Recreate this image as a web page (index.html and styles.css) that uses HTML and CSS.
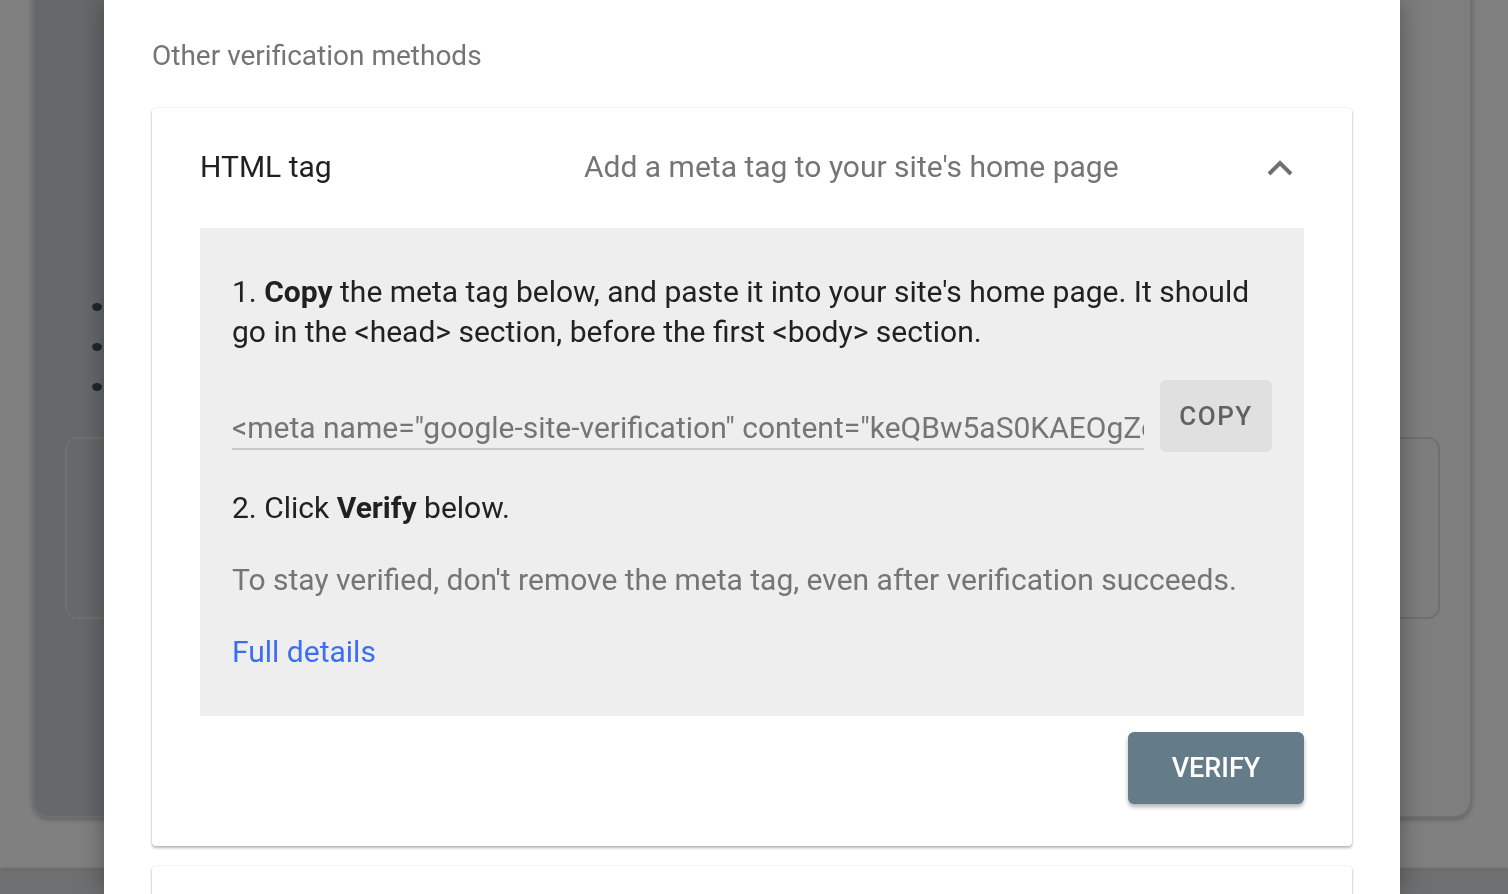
FILE: index.html
```html
<!DOCTYPE html>
<html>
<head>
<meta charset="utf-8">
<link rel="stylesheet" href="styles.css">
</head>
<body>
<div class="page">
  <div class="bg-card">
    <ul class="bg-list"><li></li><li></li><li></li></ul>
    <div class="bg-box"></div>
  </div>
  <div class="bg-footer"></div>
</div>

<div class="dialog">
  <div class="dialog-title">Other verification methods</div>
  <div class="method-card">
    <div class="method-head">
      <div class="method-name">HTML tag</div>
      <div class="method-desc">Add a meta tag to your site's home page</div>
      <svg class="chevron" width="28" height="18" viewBox="0 0 28 18"><path d="M3 15 L14 4 L25 15" fill="none" stroke="#6f6f6f" stroke-width="4"/></svg>
    </div>
    <div class="method-body">
      <div class="panel">
        <p class="step">1. <b>Copy</b> the meta tag below, and paste it into your site's home page. It should go in the &lt;head&gt; section, before the first &lt;body&gt; section.</p>
        <div class="copy-row">
          <div class="tag-field"><span class="tag-text">&lt;meta name="google-site-verification" content="keQBw5aS0KAEOgZqLr1x7vYpT3dWmN8cHs2uJfBiE4o" /&gt;</span></div>
          <button class="copy-btn">COPY</button>
        </div>
        <p class="step">2. Click <b>Verify</b> below.</p>
        <p class="note">To stay verified, don't remove the meta tag, even after verification succeeds.</p>
        <a class="details" href="#">Full details</a>
      </div>
      <div class="actions">
        <button class="verify-btn">VERIFY</button>
      </div>
    </div>
  </div>
  <div class="method-card next"></div>
</div>
</body>
</html>
```

FILE: styles.css
```css
html, body {
  margin: 0;
  padding: 0;
  height: 100%;
  overflow: hidden;
}
body {
  background: #808080;
  font-family: Roboto, "Liberation Sans", sans-serif;
}
.page {
  height: 894px;
  display: flex;
  flex-direction: column;
}
.bg-card {
  margin: -20px 36px 0 32px;
  height: 838px;
  box-sizing: border-box;
  border-radius: 0 0 18px 18px;
  background: linear-gradient(to right, #65696b 0, #65696b 72px, #7e7e7e 1368px, #7e7e7e 100%);
  border: 2px solid #707070;
  border-top: none;
  box-shadow: 0 2px 4px rgba(0,0,0,0.25);
  padding-top: 323px;
}
.bg-list {
  margin: 0;
  padding: 0 0 0 58px;
  list-style: none;
}
.bg-list li {
  width: 10px;
  height: 8px;
  border-radius: 50%;
  background: #23282b;
  margin-bottom: 32px;
}
.bg-box {
  margin: 46px 30px 0 31px;
  height: 182px;
  box-sizing: border-box;
  border: 2px solid #6e7072;
  border-radius: 12px;
}
.bg-footer {
  margin-top: 52px;
  flex: 1;
  background: #6e6f70;
  box-shadow: 0 -1px 3px rgba(0,0,0,0.3);
}

.dialog {
  position: fixed;
  top: 0;
  left: 104px;
  width: 1296px;
  height: 894px;
  background: #fff;
  box-shadow: 0 0 24px rgba(0,0,0,0.35);
  padding: 37px 48px 0;
  box-sizing: border-box;
  overflow: hidden;
}
.dialog-title {
  font-size: 28px;
  line-height: 38px;
  color: #757575;
  margin-bottom: 33px;
}
.method-card {
  background: #fff;
  border-radius: 4px;
  box-shadow: 0 2px 3px rgba(0,0,0,0.28), 0 0 2px rgba(0,0,0,0.12);
  width: 1200px;
}
.method-card.next {
  margin-top: 20px;
  height: 60px;
}
.method-head {
  display: flex;
  align-items: center;
  height: 120px;
  padding: 0 58px 0 48px;
}
.method-name {
  width: 384px;
  font-size: 30px;
  line-height: 38px;
  padding-bottom: 2px;
  color: #212121;
}
.method-desc {
  flex: 1;
  font-size: 30px;
  line-height: 38px;
  padding-bottom: 2px;
  color: #757575;
}
.chevron {
  display: block;
}
.method-body {
  padding: 0 48px 42px;
}
.panel {
  background: #eeeeee;
  padding: 44px 32px 44px;
}
.step {
  margin: 0;
  font-size: 30px;
  line-height: 40px;
  color: #212121;
}
.step b {
  font-weight: 700;
}
.copy-row {
  display: flex;
  align-items: flex-start;
  gap: 16px;
  margin: 28px 0 36px;
}
.tag-field {
  flex: 1;
  min-width: 0;
  overflow: hidden;
  white-space: nowrap;
  border-bottom: 2px solid #c8c8c8;
  padding-top: 28px;
  height: 40px;
}
.tag-text {
  font-size: 30px;
  line-height: 40px;
  color: #757575;
}
.copy-btn {
  width: 112px;
  height: 72px;
  border: none;
  border-radius: 6px;
  background: #e0e0e0;
  color: #616161;
  font-family: Roboto, "Liberation Sans", sans-serif;
  font-size: 26px;
  font-weight: 500;
  letter-spacing: 1.5px;
  padding: 0;
}
.note {
  margin: 32px 0 0;
  font-size: 30px;
  line-height: 40px;
  color: #757575;
}
.details {
  display: block;
  margin-top: 32px;
  font-size: 30px;
  line-height: 40px;
  color: #3b6ef0;
  text-decoration: none;
}
.actions {
  display: flex;
  justify-content: flex-end;
  margin-top: 16px;
}
.verify-btn {
  width: 176px;
  height: 72px;
  border: none;
  border-radius: 6px;
  background: #647b88;
  color: #fff;
  font-family: Roboto, "Liberation Sans", sans-serif;
  font-size: 27px;
  font-weight: 500;
  padding: 0;
  box-shadow: 0 3px 4px rgba(0,0,0,0.3);
}
```
